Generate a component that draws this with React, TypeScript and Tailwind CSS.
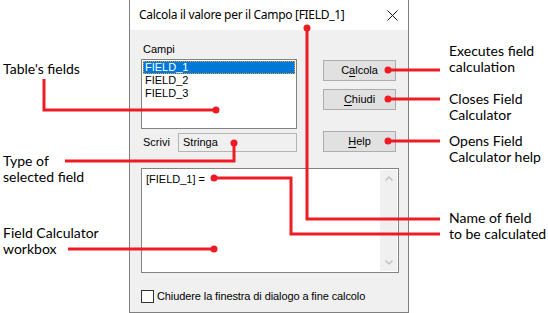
import React from "react";

const ui = { fontFamily: '"Liberation Sans", Arial, sans-serif' };
const note = { fontFamily: 'Lato, "Open Sans", sans-serif' };

function Btn({ pre, u, post }: { pre: string; u: string; post: string }) {
  return (
    <div className="w-[73px] h-[21px] border border-[#adadad] bg-[#e1e1e1] flex items-center justify-center text-[11px] text-black" style={ui}>
      <span>
        {pre}
        <span className="underline underline-offset-2">{u}</span>
        {post}
      </span>
    </div>
  );
}

export default function App() {
  const red = "#ed1c24";
  return (
    <div className="relative w-[548px] h-[313px] bg-white flex overflow-hidden">
      {/* left annotations */}
      <div className="w-[129px] pl-[3px] text-[14px] leading-[16px] text-black flex flex-col" style={note}>
        <div className="mt-[61px]">Table's fields</div>
        <div className="mt-[76px]">Type of<br />selected field</div>
        <div className="mt-[40px]">Field Calculator<br />workbox</div>
      </div>

      {/* dialog */}
      <div className="w-[280px] h-[313px] border-l border-r border-b border-[#7f7f7f] flex flex-col">
        <div className="h-[30px] bg-white flex items-center pl-[9px] pr-[10px] shrink-0">
          <span className="text-[12px] tracking-[-0.3px] text-black" style={{ fontFamily: '"Noto Sans", "Open Sans", sans-serif' }}>
            Calcola il valore per il Campo [FIELD_1]
          </span>
          <svg className="ml-auto" width="11" height="11" viewBox="0 0 11 11">
            <path d="M0.5 0.5 L10.5 10.5 M10.5 0.5 L0.5 10.5" stroke="#111" strokeWidth="1" />
          </svg>
        </div>
        <div className="flex-1 bg-[#f0f0f0] pl-[11px] pr-[9px] pt-[12px] flex flex-col text-[11px] text-black" style={ui}>
          <div className="ml-[2px] leading-[14px]">Campi</div>
          <div className="flex mt-[3px]">
            <div className="w-[156px] flex flex-col">
              <div className="h-[70px] border border-[#828282] bg-white p-[1px] flex flex-col leading-[13px]">
                <div className="h-[13px] bg-[#0078d7] text-white border border-dotted border-[#f0a030] pl-[1px] leading-[11px]">FIELD_1</div>
                <div className="h-[13px] pl-[2px]">FIELD_2</div>
                <div className="h-[13px] pl-[2px]">FIELD_3</div>
              </div>
              <div className="flex items-center mt-[4px]">
                <span className="ml-[2px] w-[35px]">Scrivi</span>
                <div className="w-[119px] h-[19px] border border-[#b4b4b4] bg-[#f0f0f0] flex items-center pl-[4px]">Stringa</div>
              </div>
            </div>
            <div className="ml-[26px] mt-[1px] flex flex-col">
              <Btn pre="C" u="a" post="lcola" />
              <div className="mt-[8px]"><Btn pre="" u="C" post="hiudi" /></div>
              <div className="mt-[21px]"><Btn pre="" u="H" post="elp" /></div>
            </div>
          </div>
          <div className="mt-[16px] w-[258px] h-[105px] border border-[#828282] bg-white flex">
            <div className="flex-1 pl-[4px] pt-[3px] leading-[14px]">[FIELD_1] =</div>
            <div className="w-[17px] bg-[#f0f0f0] flex flex-col items-center justify-between py-[6px] mr-[1px] my-[1px]">
              <svg width="8" height="5" viewBox="0 0 8 5">
                <path d="M0.5 4.5 L4 1 L7.5 4.5" stroke="#c0c0c0" strokeWidth="1.4" fill="none" />
              </svg>
              <svg width="8" height="5" viewBox="0 0 8 5">
                <path d="M0.5 0.5 L4 4 L7.5 0.5" stroke="#c0c0c0" strokeWidth="1.4" fill="none" />
              </svg>
            </div>
          </div>
          <div className="mt-[15px] flex items-center">
            <div className="w-[13px] h-[13px] border border-[#333] bg-white" />
            <span className="ml-[3px] tracking-[-0.1px]">Chiudere la finestra di dialogo a fine calcolo</span>
          </div>
        </div>
      </div>

      {/* right annotations */}
      <div className="flex-1 pl-[40px] text-[14px] leading-[16px] text-black flex flex-col" style={note}>
        <div className="mt-[43px]">Executes field<br />calculation</div>
        <div className="mt-[16px]">Closes Field<br />Calculator</div>
        <div className="mt-[10px] whitespace-nowrap">Opens Field<br />Calculator help</div>
        <div className="mt-[45px] whitespace-nowrap">Name of field<br />to be calculated</div>
      </div>

      {/* callout lines */}
      <svg className="absolute inset-0 pointer-events-none" width="548" height="313" viewBox="0 0 548 313">
        <g stroke={red} strokeWidth="3" fill="none">
          <path d="M307 28 V219 H440" />
          <path d="M44 79 V110 H216" />
          <path d="M65 161 H234 V143" />
          <path d="M68 249 H214" />
          <path d="M214 178 H291 V234 H440" />
          <path d="M388 70 H440" />
          <path d="M388 99 H440" />
          <path d="M388 141 H440" />
        </g>
        <g fill={red}>
          <circle cx="307" cy="28" r="3.5" />
          <circle cx="216" cy="110" r="3.5" />
          <circle cx="234" cy="143" r="3.5" />
          <circle cx="214" cy="249" r="3.5" />
          <circle cx="214" cy="178" r="3.5" />
          <circle cx="388" cy="70" r="3.5" />
          <circle cx="388" cy="99" r="3.5" />
          <circle cx="388" cy="141" r="3.5" />
        </g>
      </svg>
    </div>
  );
}
